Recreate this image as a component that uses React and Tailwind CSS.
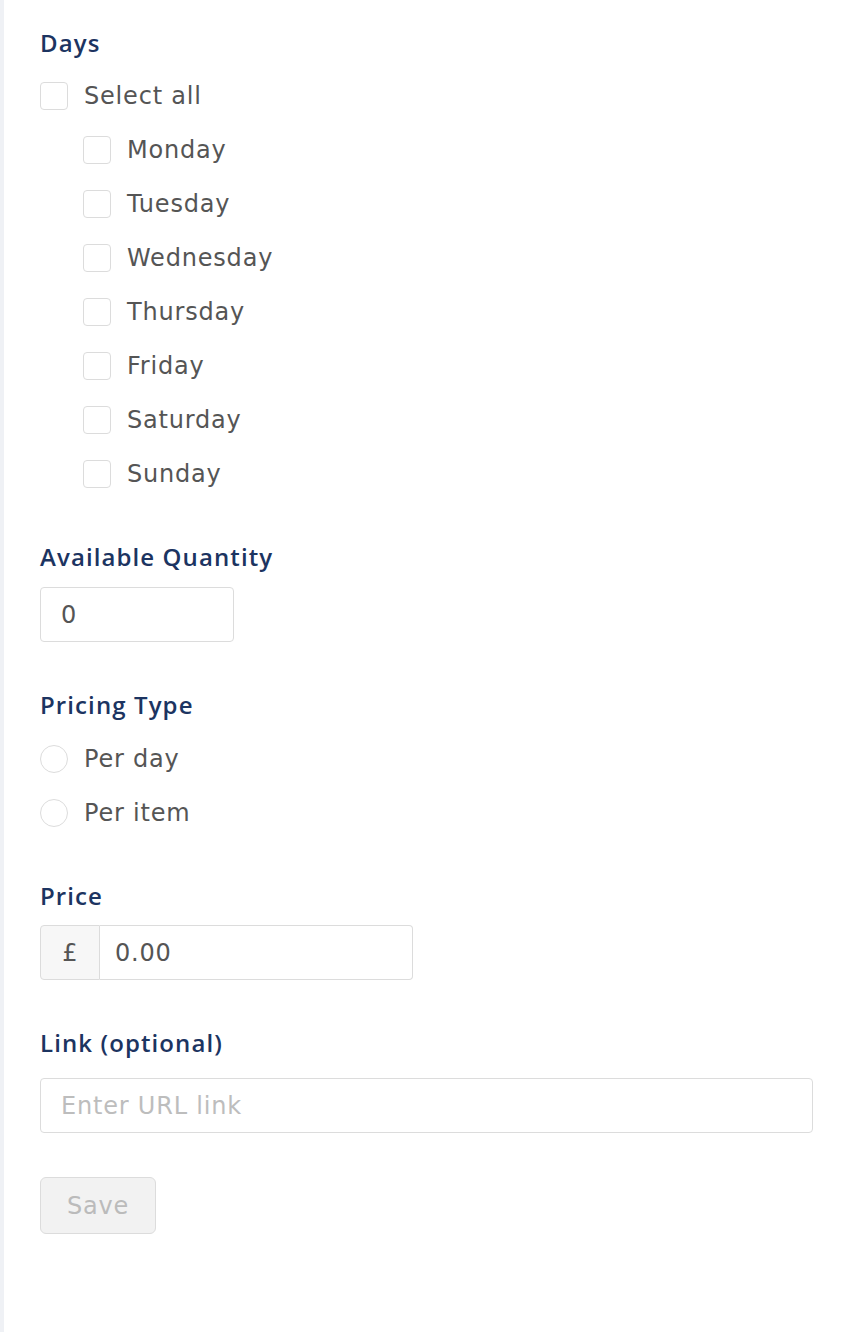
import React from "react";

const days = ["Monday", "Tuesday", "Wednesday", "Thursday", "Friday", "Saturday", "Sunday"];

function Box({ round }) {
  return (
    <span
      className={
        "inline-block w-[28px] h-[28px] border border-[#dcdcdc] bg-white shrink-0 " +
        (round ? "rounded-full" : "rounded-[4px]")
      }
    />
  );
}

function Option({ label, round, indent }) {
  return (
    <label className={"flex items-center h-[54px] gap-[16px] " + (indent ? "pl-[43px]" : "")}>
      <Box round={round} />
      <span className="text-[24px] tracking-[0.8px] text-[#555555]">{label}</span>
    </label>
  );
}

function Label({ children, className = "" }) {
  return (
    <div
      className={"h-[30px] leading-[30px] text-[24px] font-semibold tracking-[1.1px] text-[#1c3461] " + className}
      style={{ fontFamily: "'Open Sans', sans-serif" }}
    >
      {children}
    </div>
  );
}

export default function App() {
  return (
    <div
      className="min-h-[1332px] w-[850px] bg-white border-l-[4px] border-[#eff1f5] pl-[36px] pr-[37px] pt-[28px]"
      style={{ fontFamily: "'DejaVu Sans', 'Open Sans', sans-serif" }}
    >
      {/* Days */}
      <Label>Days</Label>
      <div className="mt-[11px]">
        <Option label="Select all" />
        {days.map((d) => (
          <Option key={d} label={d} indent />
        ))}
      </div>

      {/* Quantity */}
      <Label className="mt-[41px]">Available Quantity</Label>
      <input
        defaultValue="0"
        className="mt-[15px] block w-[194px] h-[55px] border border-[#dcdcdc] rounded-[4px] px-[20px] text-[24px] tracking-[0.8px] text-[#555555] outline-none"
      />

      {/* Pricing */}
      <Label className="mt-[48px]">Pricing Type</Label>
      <div className="mt-[12px]">
        <Option label="Per day" round />
        <Option label="Per item" round />
      </div>

      {/* Price */}
      <Label className="mt-[41px]">Price</Label>
      <div className="mt-[14px] flex w-[373px] h-[55px]">
        <span className="w-[60px] flex items-center justify-center bg-[#f7f7f7] border border-[#dcdcdc] rounded-l-[4px] text-[24px] text-[#555555]">
          £
        </span>
        <input
          defaultValue="0.00"
          className="flex-1 min-w-0 border border-l-0 border-[#dcdcdc] rounded-r-[4px] px-[15px] text-[24px] tracking-[0.8px] text-[#555555] outline-none"
        />
      </div>

      {/* Link */}
      <Label className="mt-[48px]">Link (optional)</Label>
      <input
        placeholder="Enter URL link"
        className="mt-[20px] block w-full h-[55px] border border-[#dcdcdc] rounded-[4px] px-[20px] text-[24px] tracking-[0.8px] text-[#555555] placeholder:text-[#bdbdbd] outline-none"
      />

      <button
        disabled
        className="mt-[44px] w-[116px] h-[57px] bg-[#f2f2f2] border border-[#dcdcdc] rounded-[6px] text-[24px] tracking-[0.8px] text-[#bbbbbb]"
      >
        Save
      </button>
    </div>
  );
}
